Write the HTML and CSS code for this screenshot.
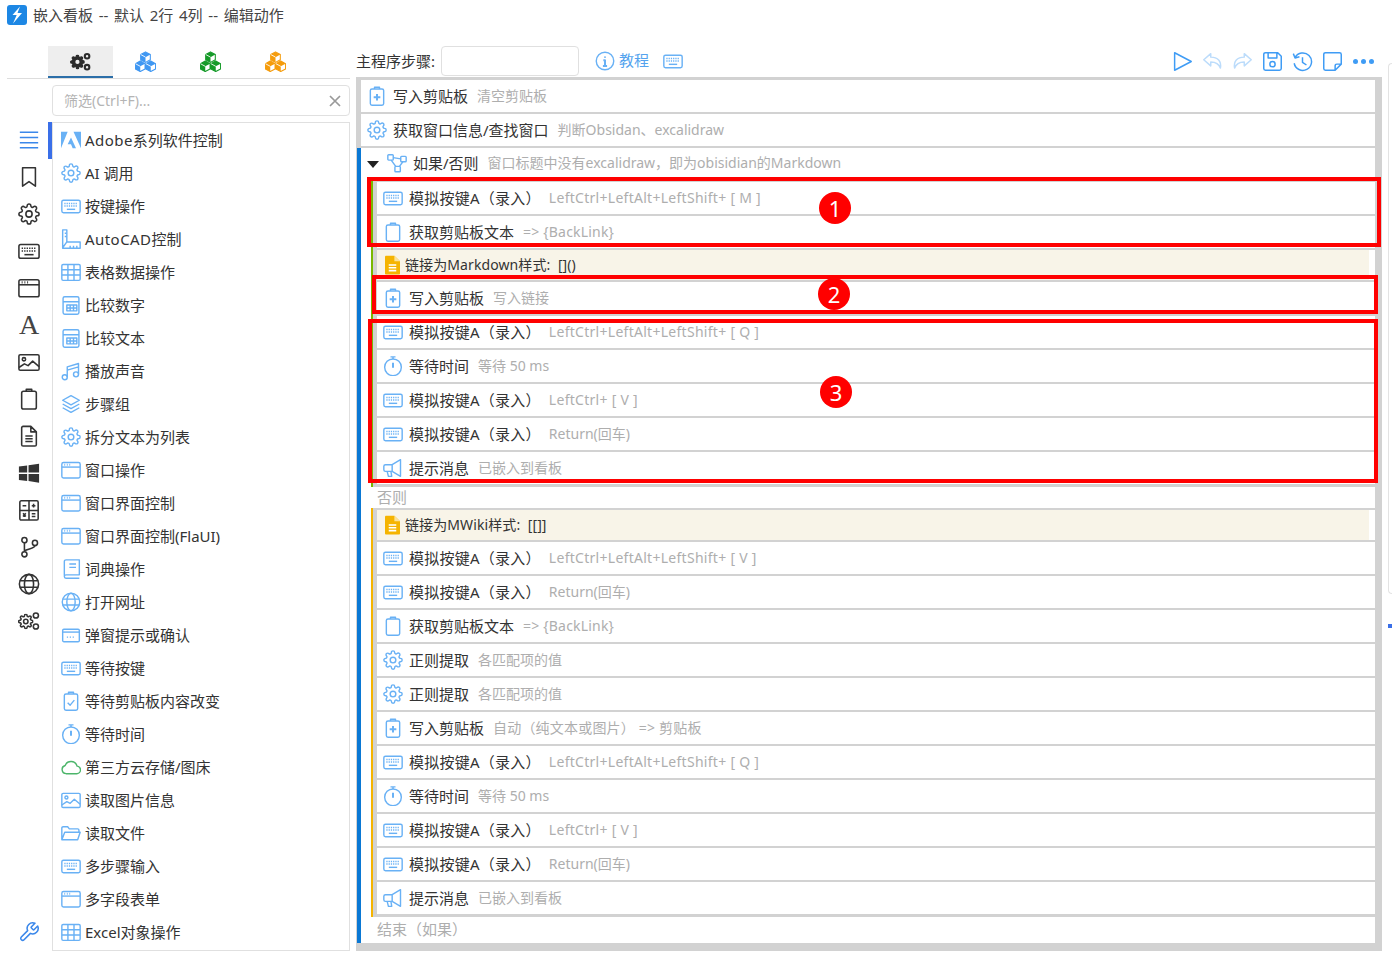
FILE: index.html
```html
<!DOCTYPE html>
<html lang="zh-CN">
<head>
    <meta charset="UTF-8">
    <meta name="viewport" content="width=device-width, initial-scale=1.0">
    <title>嵌入看板 -- 编辑动作</title>
    <link rel="stylesheet" href="styles.css">
</head>
<body>
    <svg class="sprite" xmlns="http://www.w3.org/2000/svg">
        <symbol id="kb" viewBox="0 0 24 24"><rect x="1" y="5" width="22" height="15" rx="2"/><path d="M4 9h16M4 12h16" stroke-dasharray="1.5 1.2"/><path d="M7 16h10"/></symbol>
        <symbol id="gear" viewBox="0 0 24 24"><circle cx="12" cy="12" r="3.4"/><path d="M19.4 15a1.65 1.65 0 0 0 .33 1.82l.06.06a2 2 0 0 1 0 2.83 2 2 0 0 1-2.83 0l-.06-.06a1.65 1.65 0 0 0-1.82-.33 1.65 1.65 0 0 0-1 1.51V21a2 2 0 0 1-2 2 2 2 0 0 1-2-2v-.09A1.65 1.65 0 0 0 9 19.4a1.65 1.65 0 0 0-1.82.33l-.06.06a2 2 0 0 1-2.83 0 2 2 0 0 1 0-2.83l.06-.06a1.65 1.65 0 0 0 .33-1.82 1.65 1.65 0 0 0-1.51-1H3a2 2 0 0 1-2-2 2 2 0 0 1 2-2h.09A1.65 1.65 0 0 0 4.6 9a1.65 1.65 0 0 0-.33-1.82l-.06-.06a2 2 0 0 1 0-2.83 2 2 0 0 1 2.83 0l.06.06a1.65 1.65 0 0 0 1.82.33H9a1.65 1.65 0 0 0 1-1.51V3a2 2 0 0 1 2-2 2 2 0 0 1 2 2v.09a1.65 1.65 0 0 0 1 1.51 1.65 1.65 0 0 0 1.82-.33l.06-.06a2 2 0 0 1 2.83 0 2 2 0 0 1 0 2.83l-.06.06a1.65 1.65 0 0 0-.33 1.82V9a1.65 1.65 0 0 0 1.51 1H21a2 2 0 0 1 2 2 2 2 0 0 1-2 2h-.09a1.65 1.65 0 0 0-1.51 1z"/></symbol>
        <symbol id="clip" viewBox="0 0 24 24"><rect x="4" y="3.5" width="16" height="19.5" rx="2"/><path d="M9 3.5V1.5h6v2" /></symbol>
        <symbol id="clip-plus" viewBox="0 0 24 24"><rect x="4" y="3.5" width="16" height="19.5" rx="2"/><path d="M9 3.5V1.5h6v2"/><path class="thick" d="M12 9.5v8M8 13.500h8"/></symbol>
        <symbol id="clip-check" viewBox="0 0 24 24"><rect x="4" y="3.500" width="16" height="19.500" rx="2"/><path d="M9 3.500V1.500h6v2"/><path d="M8 14l3 3 5-6"/></symbol>
        <symbol id="timer" viewBox="0 0 24 24"><circle cx="12" cy="13.500" r="10"/><path d="M9 1h6M12 1v2.500"/><path class="thick" d="M12 8v6"/></symbol>
        <symbol id="horn" viewBox="0 0 24 24"><path d="M1 10a2 2 0 0 1 2-2h8v8H3a2 2 0 0 1-2-2zM11 8l10-6v20l-10-6M5 16l1.500 6h4L9.500 16"/></symbol>
        <symbol id="flow" viewBox="0 0 24 24"><rect x="1" y="2" width="6.500" height="6.500" rx="1"/><rect x="16.500" y="4" width="6.500" height="6.500" rx="1"/><rect x="9.500" y="16" width="6.500" height="6.500" rx="1"/><path d="M7.500 5.500l9 1.500M5 8.500l5.500 7.500M19 10.500l-4 5.500"/></symbol>
        <symbol id="adobe" viewBox="0 0 24 24"><path class="solid" d="M0 2h8L0 22zM15 2h9v20zM12 9l6 13h-4l-2-5H8z"/></symbol>
        <symbol id="cad" viewBox="0 0 24 24"><path d="M2 1h5v14.500h16V23H2zM7 15.500l-5 7"/><path d="M4.500 5h2M4.500 9h2M11 23v-3M15 23v-3M19 23v-3"/></symbol>
        <symbol id="table" viewBox="0 0 24 24"><rect x="1" y="3" width="22" height="19" rx="1.500"/><path d="M1 9.300h22M1 15.600h22M8.300 3v19M15.600 3v19"/></symbol>
        <symbol id="calc" viewBox="0 0 24 24"><rect x="2.500" y="2" width="19" height="21" rx="2"/><path d="M2.500 8h19M7 12h12v7H7zM7 15.500h12M11 12v7M15 12v7"/></symbol>
        <symbol id="music" viewBox="0 0 24 24"><circle cx="4.500" cy="19.500" r="3"/><circle cx="18" cy="16" r="3"/><path d="M7.500 19.500V7L21 3v13M7.500 11L21 7"/></symbol>
        <symbol id="layers" viewBox="0 0 24 24"><path d="M12 2L2 7.500 12 13l10-5.500zM2 12l10 5.500L22 12M2 16.500L12 22l10-5.500"/></symbol>
        <symbol id="window" viewBox="0 0 24 24"><rect x="1" y="3" width="22" height="18.500" rx="2"/><path d="M1 8.500h22"/><path class="thick" d="M4 5.800h1M7 5.800h1M10 5.800h1"/></symbol>
        <symbol id="book" viewBox="0 0 24 24"><path d="M4 20V3a2 2 0 0 1 2-2h16v18H6a2 2 0 0 0 0 4h16M10 6h8M10 10h8"/></symbol>
        <symbol id="globe" viewBox="0 0 24 24"><circle cx="12" cy="12" r="10.500"/><ellipse cx="12" cy="12" rx="5" ry="10.500"/><path d="M2 8.500h20M2 15.500h20"/></symbol>
        <symbol id="dialog" viewBox="0 0 24 24"><rect x="2" y="5" width="20" height="15" rx="1.500"/><path d="M2 8.500h20"/><path d="M7 14.500h10" stroke-dasharray="1.500 2"/></symbol>
        <symbol id="cloud" viewBox="0 0 24 24"><path d="M6 20a5 5 0 0 1-1-9.800 7.500 7.500 0 0 1 14.300.8A4.500 4.500 0 0 1 18.500 20z"/></symbol>
        <symbol id="image" viewBox="0 0 24 24"><rect x="1" y="4" width="22" height="17" rx="1.500"/><circle cx="6.500" cy="9" r="1.800"/><path d="M1 18l6-4 4 2 5-5 7 6"/></symbol>
        <symbol id="folder" viewBox="0 0 24 24"><path d="M1 20V6a1.500 1.500 0 0 1 1.500-1.500H8l2 2.500h10a1.500 1.500 0 0 1 1.500 1.500V11M1 20l3.500-9H23l-3 9z"/></symbol>
        <symbol id="menu" viewBox="0 0 24 24"><path d="M2 3.500h20M2 9.200h20M2 14.900h20M2 20.500h20"/></symbol>
        <symbol id="mark" viewBox="0 0 24 24"><path d="M5 2h14v20l-7-5-7 5z"/></symbol>
        <symbol id="doc" viewBox="0 0 24 24"><path d="M4 3a1.500 1.500 0 0 1 1.500-1.500H14l6 6V21.500A1.500 1.500 0 0 1 18.500 23h-13A1.500 1.500 0 0 1 4 21.500zM14 1.500v6h6M8 12h8M8 15h8M8 18h8"/></symbol>
        <symbol id="win" viewBox="0 0 24 24"><path class="solid" d="M1 5l9-1.300v7.800H1zM11.500 3.500L23 1.800v9.700H11.500zM1 13h9v7.800L1 19.500zM11.500 13H23v9.500l-11.500-1.700z"/></symbol>
        <symbol id="calc2" viewBox="0 0 24 24"><rect x="2" y="2" width="20" height="21" rx="1.500"/><path d="M12 2v21M2 12.500h20M5 7.300h4M15 7.300h4M17 5.300v4M5.500 15.500l3 3.500M8.500 15.500l-3 3.500M15 16h4M15 19h4"/></symbol>
        <symbol id="git" viewBox="0 0 24 24"><circle cx="7" cy="4.500" r="2.800"/><circle cx="7" cy="20" r="2.800"/><circle cx="18.500" cy="7.500" r="2.800"/><path d="M7 7.300v9.900M18.500 10.300c0 3.500-8 3.500-11.500 6"/></symbol>
        <symbol id="gears" viewBox="0 0 24 24"><use class="gear-big" href="#gear" x="0" y="4" width="17" height="17"/><circle cx="19.500" cy="6" r="2.800"/><circle cx="19.500" cy="18" r="2.800"/></symbol>
        <symbol id="wrench" viewBox="0 0 24 24"><path d="M14.700 6.300a1 1 0 0 0 0 1.400l1.600 1.600a1 1 0 0 0 1.400 0l3.770-3.770a6 6 0 0 1-7.940 7.940l-6.910 6.910a2.120 2.120 0 0 1-3-3l6.910-6.910a6 6 0 0 1 7.940-7.940l-3.760 3.760z"/></symbol>
        <symbol id="cubes" viewBox="0 0 24 24">
            <path class="face" d="M12 1l5.500 3v6L12 13 6.500 10V4zM6 11.500l5.500 3v6L6 23.500l-5.500-3v-6zM18 11.500l5.500 3v6l-5.500 3-5.500-3v-6z"/>
            <path class="solid" d="M12 1l5.500 3L12 7v6l-5.500-3V4zM6 11.500l5.500 3L6 17.500v6l-5.500-3v-6zM18 11.500l5.500 3-5.500 3v6l-5.500-3v-6z"/>
            <path class="cut" d="M6.500 4L12 7M.5 14.500L6 17.500M12.500 14.500l5.500 3"/>
        </symbol>
        <symbol id="gears-solid" viewBox="0 0 24 24">
            <use class="gear-fill" href="#gear" x="0" y="4" width="17" height="17"/>
            <circle class="gear-hole" cx="8.500" cy="12.500" r="2.400"/>
            <circle class="gear-ring" cx="19.500" cy="6" r="2.600"/>
            <circle class="gear-ring" cx="19.500" cy="18.500" r="2.600"/>
        </symbol>
        <symbol id="play" viewBox="0 0 24 24"><path d="M3 2l19 10L3 22z"/></symbol>
        <symbol id="undo" viewBox="0 0 24 24"><path d="M10 3L2 10l8 7v-4.500c5 0 9 1 11 7 1.500-8-3-12.500-11-12.500z"/></symbol>
        <symbol id="redo" viewBox="0 0 24 24"><path d="M14 3l8 7-8 7v-4.500c-5 0-9 1-11 7-1.500-8 3-12.500 11-12.500z"/></symbol>
        <symbol id="save" viewBox="0 0 24 24"><path d="M2 4a2 2 0 0 1 2-2h14l4 4v14a2 2 0 0 1-2 2H4a2 2 0 0 1-2-2zM7 2v6h10V2"/><circle cx="12" cy="15" r="3"/></symbol>
        <symbol id="history" viewBox="0 0 24 24"><path d="M3.500 7.500A10 10 0 1 1 2.500 14M1.500 3l2 5 5-1.500M12 7v6l4.500 3"/></symbol>
        <symbol id="note" viewBox="0 0 24 24"><path d="M15 22H4a2 2 0 0 1-2-2V4a2 2 0 0 1 2-2h16a2 2 0 0 1 2 2v11zM15 22v-5a2 2 0 0 1 2-2h5"/></symbol>
        <symbol id="info" viewBox="0 0 24 24"><circle cx="12" cy="12" r="10.500"/><path class="thick" d="M12 6.500v1.500M10 11h2v7M9.500 18h5"/></symbol>
    </svg>

    <div class="title-bar">
        <svg class="logo" viewBox="0 0 20 20"><rect width="20" height="20" rx="3" fill="#1d87e4"/><path d="M13 1.500L5.500 10h4.200L6 18.500 15 8h-4.500z" fill="#fff"/></svg>
        <span class="title-text">嵌入看板 -- 默认 2行 4列 -- 编辑动作</span>
    </div>

    <div class="main">
        <div class="left">
            <div class="tabs">
                <div class="tab active"><svg class="tab-ico ink"><use href="#gears-solid"/></svg></div>
                <div class="tab"><svg class="tab-ico c-blue"><use href="#cubes"/></svg></div>
                <div class="tab"><svg class="tab-ico c-green"><use href="#cubes"/></svg></div>
                <div class="tab"><svg class="tab-ico c-orange"><use href="#cubes"/></svg></div>
            </div>
            <div class="left-body">
                <div class="rail">
                    <div class="rail-item on"><svg class="ico"><use href="#menu"/></svg></div>
                    <div class="rail-item"><svg class="ico"><use href="#mark"/></svg></div>
                    <div class="rail-item"><svg class="ico"><use href="#gear"/></svg></div>
                    <div class="rail-item"><svg class="ico"><use href="#kb"/></svg></div>
                    <div class="rail-item"><svg class="ico"><use href="#window"/></svg></div>
                    <div class="rail-item rail-a">A</div>
                    <div class="rail-item"><svg class="ico"><use href="#image"/></svg></div>
                    <div class="rail-item"><svg class="ico"><use href="#clip"/></svg></div>
                    <div class="rail-item"><svg class="ico"><use href="#doc"/></svg></div>
                    <div class="rail-item"><svg class="ico"><use href="#win"/></svg></div>
                    <div class="rail-item"><svg class="ico"><use href="#calc2"/></svg></div>
                    <div class="rail-item"><svg class="ico"><use href="#git"/></svg></div>
                    <div class="rail-item"><svg class="ico"><use href="#globe"/></svg></div>
                    <div class="rail-item"><svg class="ico"><use href="#gears"/></svg></div>
                    <div class="rail-item rail-end on"><svg class="ico"><use href="#wrench"/></svg></div>
                </div>
                <div class="tree">
                    <div class="filter">
                        <span>筛选(Ctrl+F)...</span>
                        <svg class="filter-x" viewBox="0 0 12 12"><path d="M1 1l10 10M11 1L1 11"/></svg>
                    </div>
                    <div class="cats">
                        <div class="cat selected"><svg class="ico"><use href="#adobe"/></svg><span><span class="wide">Adobe</span>系列软件控制</span></div>
                        <div class="cat"><svg class="ico"><use href="#gear"/></svg><span>AI 调用</span></div>
                        <div class="cat"><svg class="ico"><use href="#kb"/></svg><span>按键操作</span></div>
                        <div class="cat"><svg class="ico"><use href="#cad"/></svg><span><span class="wide">AutoCAD</span>控制</span></div>
                        <div class="cat"><svg class="ico"><use href="#table"/></svg><span>表格数据操作</span></div>
                        <div class="cat"><svg class="ico"><use href="#calc"/></svg><span>比较数字</span></div>
                        <div class="cat"><svg class="ico"><use href="#calc"/></svg><span>比较文本</span></div>
                        <div class="cat"><svg class="ico"><use href="#music"/></svg><span>播放声音</span></div>
                        <div class="cat"><svg class="ico"><use href="#layers"/></svg><span>步骤组</span></div>
                        <div class="cat"><svg class="ico"><use href="#gear"/></svg><span>拆分文本为列表</span></div>
                        <div class="cat"><svg class="ico"><use href="#window"/></svg><span>窗口操作</span></div>
                        <div class="cat"><svg class="ico"><use href="#window"/></svg><span>窗口界面控制</span></div>
                        <div class="cat"><svg class="ico"><use href="#window"/></svg><span>窗口界面控制(FlaUI)</span></div>
                        <div class="cat"><svg class="ico"><use href="#book"/></svg><span>词典操作</span></div>
                        <div class="cat"><svg class="ico"><use href="#globe"/></svg><span>打开网址</span></div>
                        <div class="cat"><svg class="ico"><use href="#dialog"/></svg><span>弹窗提示或确认</span></div>
                        <div class="cat"><svg class="ico"><use href="#kb"/></svg><span>等待按键</span></div>
                        <div class="cat"><svg class="ico"><use href="#clip-check"/></svg><span>等待剪贴板内容改变</span></div>
                        <div class="cat"><svg class="ico"><use href="#timer"/></svg><span>等待时间</span></div>
                        <div class="cat"><svg class="ico c-cloud"><use href="#cloud"/></svg><span>第三方云存储/图床</span></div>
                        <div class="cat"><svg class="ico"><use href="#image"/></svg><span>读取图片信息</span></div>
                        <div class="cat"><svg class="ico"><use href="#folder"/></svg><span>读取文件</span></div>
                        <div class="cat"><svg class="ico"><use href="#kb"/></svg><span>多步骤输入</span></div>
                        <div class="cat"><svg class="ico"><use href="#window"/></svg><span>多字段表单</span></div>
                        <div class="cat"><svg class="ico"><use href="#table"/></svg><span>Excel对象操作</span></div>
                    </div>
                </div>
            </div>
        </div>

        <div class="right">
            <div class="toolbar">
                <span class="step-label">主程序步骤:</span>
                <div class="step-input"></div>
                <a class="help"><svg class="ico"><use href="#info"/></svg><span>教程</span></a>
                <svg class="ico kb-btn"><use href="#kb"/></svg>
                <div class="actions">
                    <svg class="act"><use href="#play"/></svg>
                    <svg class="act dim"><use href="#undo"/></svg>
                    <svg class="act dim"><use href="#redo"/></svg>
                    <svg class="act"><use href="#save"/></svg>
                    <svg class="act"><use href="#history"/></svg>
                    <svg class="act"><use href="#note"/></svg>
                    <span class="dots"><i></i><i></i><i></i></span>
                </div>
            </div>

            <div class="panel">
                <div class="row top"><svg class="ico"><use href="#clip-plus"/></svg><span class="name">写入剪贴板</span><span class="sub">清空剪贴板</span></div>
                <div class="row top"><svg class="ico"><use href="#gear"/></svg><span class="name">获取窗口信息/查找窗口</span><span class="sub">判断Obsidan、excalidraw</span></div>

                <div class="branch">
                    <div class="row head"><i class="caret"></i><svg class="ico"><use href="#flow"/></svg><span class="name">如果/否则</span><span class="sub">窗口标题中没有excalidraw，即为obisidian的Markdown</span></div>
                    <div class="nest green">
                        <div class="row"><svg class="ico"><use href="#kb"/></svg><span class="name key-name">模拟按键A（录入）</span><span class="sub keys">LeftCtrl+LeftAlt+LeftShift+ [ M ]</span></div>
                        <div class="row"><svg class="ico"><use href="#clip"/></svg><span class="name">获取剪贴板文本</span><span class="sub link">=&gt; {BackLink}</span></div>
                        <div class="note"><svg class="note-ico" viewBox="0 0 16 20"><path d="M1 0h9l6 6v13a1 1 0 0 1-1 1H1a1 1 0 0 1-1-1V1a1 1 0 0 1 1-1z" fill="#f5b400"/><path d="M10 0l6 6h-6z" fill="#fbe29a"/><path d="M4 10h8M4 13h8M4 16h8" stroke="#fff"/></svg><span>链接为Markdown样式:&nbsp;&nbsp;[]()</span></div>
                        <div class="row"><svg class="ico"><use href="#clip-plus"/></svg><span class="name">写入剪贴板</span><span class="sub">写入链接</span></div>
                        <div class="row"><svg class="ico"><use href="#kb"/></svg><span class="name key-name">模拟按键A（录入）</span><span class="sub keys">LeftCtrl+LeftAlt+LeftShift+ [ Q ]</span></div>
                        <div class="row"><svg class="ico"><use href="#timer"/></svg><span class="name">等待时间</span><span class="sub">等待 50 ms</span></div>
                        <div class="row"><svg class="ico"><use href="#kb"/></svg><span class="name key-name">模拟按键A（录入）</span><span class="sub keys">LeftCtrl+ [ V ]</span></div>
                        <div class="row"><svg class="ico"><use href="#kb"/></svg><span class="name key-name">模拟按键A（录入）</span><span class="sub keys-plain">Return(回车)</span></div>
                        <div class="row"><svg class="ico"><use href="#horn"/></svg><span class="name">提示消息</span><span class="sub">已嵌入到看板</span></div>
                    </div>
                    <div class="label else">否则</div>
                    <div class="nest orange">
                        <div class="note"><svg class="note-ico" viewBox="0 0 16 20"><path d="M1 0h9l6 6v13a1 1 0 0 1-1 1H1a1 1 0 0 1-1-1V1a1 1 0 0 1 1-1z" fill="#f5b400"/><path d="M10 0l6 6h-6z" fill="#fbe29a"/><path d="M4 10h8M4 13h8M4 16h8" stroke="#fff"/></svg><span>链接为MWiki样式:&nbsp;&nbsp;[[]]</span></div>
                        <div class="row"><svg class="ico"><use href="#kb"/></svg><span class="name key-name">模拟按键A（录入）</span><span class="sub keys">LeftCtrl+LeftAlt+LeftShift+ [ V ]</span></div>
                        <div class="row"><svg class="ico"><use href="#kb"/></svg><span class="name key-name">模拟按键A（录入）</span><span class="sub keys-plain">Return(回车)</span></div>
                        <div class="row"><svg class="ico"><use href="#clip"/></svg><span class="name">获取剪贴板文本</span><span class="sub link">=&gt; {BackLink}</span></div>
                        <div class="row"><svg class="ico"><use href="#gear"/></svg><span class="name">正则提取</span><span class="sub">各匹配项的值</span></div>
                        <div class="row"><svg class="ico"><use href="#gear"/></svg><span class="name">正则提取</span><span class="sub">各匹配项的值</span></div>
                        <div class="row"><svg class="ico"><use href="#clip-plus"/></svg><span class="name">写入剪贴板</span><span class="sub link">自动（纯文本或图片） =&gt; 剪贴板</span></div>
                        <div class="row"><svg class="ico"><use href="#kb"/></svg><span class="name key-name">模拟按键A（录入）</span><span class="sub keys">LeftCtrl+LeftAlt+LeftShift+ [ Q ]</span></div>
                        <div class="row"><svg class="ico"><use href="#timer"/></svg><span class="name">等待时间</span><span class="sub">等待 50 ms</span></div>
                        <div class="row"><svg class="ico"><use href="#kb"/></svg><span class="name key-name">模拟按键A（录入）</span><span class="sub keys">LeftCtrl+ [ V ]</span></div>
                        <div class="row"><svg class="ico"><use href="#kb"/></svg><span class="name key-name">模拟按键A（录入）</span><span class="sub keys-plain">Return(回车)</span></div>
                        <div class="row"><svg class="ico"><use href="#horn"/></svg><span class="name">提示消息</span><span class="sub">已嵌入到看板</span></div>
                    </div>
                    <div class="label end">结束（如果）</div>
                </div>

                <!-- red annotations drawn over the steps -->
                <div class="mark box-1"></div>
                <div class="mark box-2"></div>
                <div class="mark box-3"></div>
                <div class="badge badge-1">1</div>
                <div class="badge badge-2">2</div>
                <div class="badge badge-3">3</div>
            </div>
        </div>

        <div class="edge">
            <div class="edge-box"></div>
            <div class="edge-dot"></div>
        </div>
    </div>
</body>
</html>
```

FILE: styles.css
```css
* {
    box-sizing: border-box;
}
body {
    margin: 0;
    height: 956px;
    overflow: hidden;
    background: #fff;
    color: #333;
    font-family: "Noto Sans", "Noto Sans CJK SC", sans-serif;
    font-size: 15px;
}
.sprite {
    display: none;
}
svg {
    fill: none;
    stroke: currentColor;
    stroke-width: 1.7;
    stroke-linejoin: round;
}
.solid {
    fill: currentColor;
    stroke: none;
}
.thick {
    stroke-width: 2.4;
}
.ico {
    flex: none;
    width: 20px;
    height: 20px;
    color: #69b1f5;
}

/* title */
.title-bar {
    display: flex;
    align-items: center;
    height: 30px;
    padding: 0 0 0 7px;
    gap: 6px;
    color: #444;
}
.logo {
    width: 20px;
    height: 20px;
    stroke: none;
}
.title-text {
    padding-bottom: 2px;
    word-spacing: 1.8px;
}

.main {
    display: flex;
    margin-top: 16px;
    padding-left: 7px;
}

/* left column */
.left {
    width: 343px;
    flex: none;
}
.tabs {
    display: flex;
    height: 33px;
    padding-left: 41px;
    border-bottom: 1px solid #ddd;
}
.tab {
    display: flex;
    justify-content: center;
    align-items: center;
    width: 65px;
    height: 32px;
}
.tab.active {
    background: #eee;
    border-bottom: 2px solid #2b6ea8;
}
.tab-ico {
    width: 21px;
    height: 21px;
}
.tab:not(.active) .tab-ico {
    margin: 0 0 1px -1px;
}
.c-blue { color: #3f97f2; }
.c-green { color: #159a28; }
.c-orange { color: #f59c0c; }
.c-cloud { color: #4cb56a; }
.face {
    fill: #fff;
    stroke: currentColor;
    stroke-width: 1.2;
}
.cut {
    stroke: #fff;
    stroke-width: 1;
}
.ink {
    color: #2b2b2b;
}
.gear-big {
    stroke-width: 2.4;
}
.gear-fill {
    fill: currentColor;
    stroke-width: 2;
}
.gear-hole {
    fill: #eee;
    stroke: none;
}
.gear-ring {
    stroke-width: 2.4;
}
.left-body {
    display: flex;
}
.rail {
    display: flex;
    flex-direction: column;
    width: 45px;
    height: 872px;
    padding: 42px 1px 1px 0;
}
.rail-item {
    display: flex;
    justify-content: center;
    align-items: center;
    height: 37px;
}
.rail-item .ico {
    width: 22px;
    height: 22px;
    color: #333;
}
.rail-item.on .ico {
    color: #3a87ea;
}
.rail-end {
    margin-top: auto;
}
.rail-a {
    font-family: "Liberation Serif", serif;
    font-size: 28px;
    color: #444;
}
.tree {
    flex: 1;
    min-width: 0;
}
.filter {
    display: flex;
    align-items: center;
    justify-content: space-between;
    height: 31px;
    margin-top: 6px;
    padding: 0 8px 0 11px;
    border: 1px solid #e0e0e0;
    border-radius: 4px;
    font-size: 14px;
    color: #b4b4b4;
}
.filter span {
    padding-bottom: 2px;
}
.filter-x {
    width: 12px;
    height: 12px;
    color: #999;
}
.cats {
    height: 829px;
    margin-top: 6px;
    border: 1px solid #e0e0e0;
}
.cat {
    position: relative;
    display: flex;
    align-items: center;
    gap: 4px;
    height: 33px;
    padding-left: 8px;
}
.cat.selected::before {
    content: "";
    position: absolute;
    left: -5px;
    top: -1px;
    width: 4px;
    height: 37px;
    background: #3a6fe8;
}
.wide {
    letter-spacing: .45px;
}

/* right column */
.right {
    width: 1026px;
    flex: none;
    margin-left: 6px;
}
.toolbar {
    display: flex;
    align-items: center;
    height: 30px;
    margin-bottom: 1px;
}
.step-label {
    width: 85px;
    padding-bottom: 1px;
}
.step-input {
    width: 138px;
    height: 30px;
    border: 1px solid #e0e0e0;
    border-radius: 4px;
}
.help {
    display: flex;
    align-items: center;
    gap: 4px;
    margin-left: 16px;
    color: #54a3ee;
}
.help span {
    padding-bottom: 3px;
}
.kb-btn {
    margin-left: 14px;
}
.actions {
    display: flex;
    align-items: center;
    gap: 9px;
    margin-left: auto;
    padding-right: 8px;
    color: #3f9cf5;
}
.act {
    width: 21px;
    height: 21px;
}
.act.dim {
    color: #bcdcfb;
}
.dots {
    display: flex;
    gap: 3px;
    margin-left: 1px;
}
.dots i {
    width: 5px;
    height: 5px;
    border-radius: 50%;
    background: #3f9cf5;
}

/* step panel */
.panel {
    position: relative;
    padding: 3px 7px 8px 1px;
    background: #d2d2d2;
}
.row {
    display: flex;
    align-items: center;
    height: 32px;
    margin-bottom: 2px;
    padding-left: 6px;
    background: #fff;
}
.row .ico {
    margin-right: 6px;
}
.row.top {
    margin-left: 4px;
}
.name,
.sub {
    padding-bottom: 2px;
}
.name {
    color: #333;
}
.key-name {
    letter-spacing: .25px;
}
.sub {
    margin-left: 9px;
    font-size: 14px;
    color: #aeaeae;
}
.keys {
    margin-left: 8px;
    letter-spacing: .28px;
}
.keys-plain {
    margin-left: 8px;
}
.link {
    letter-spacing: .2px;
}
.branch {
    border-left: 4px solid #0a78d4;
    background: #fff;
}
.row.head {
    margin-bottom: 0;
}
.head .name,
.head .sub {
    padding-bottom: 4px;
}
.head .ico {
    margin-bottom: 2px;
}
.caret {
    width: 0;
    height: 0;
    margin-right: 8px;
    border-style: solid;
    border-width: 7px 6px 0;
    border-color: #222 transparent transparent;
}
.nest {
    margin-left: 10px;
    padding: 2px 0 1px 4px;
    border-left: 2px solid;
    background: #d2d2d2;
}
.nest.green {
    border-color: #7ab800;
}
.nest.orange {
    border-color: #f5b400;
}
.note {
    display: flex;
    align-items: center;
    height: 30px;
    margin-bottom: 2px;
    padding-left: 8px;
    border-right: 6px solid #fff;
    background: #f8f4e8;
    font-size: 14px;
    letter-spacing: .1px;
}
.note span {
    padding-bottom: 2px;
}
.note-ico {
    width: 15px;
    height: 20px;
    margin-right: 5px;
    stroke: none;
}
.note-ico path[stroke] {
    stroke: #fff;
}
.label {
    padding-left: 16px;
    color: #aeaeae;
}
.label.else {
    height: 21px;
    line-height: 21px;
}
.label.end {
    height: 26px;
    line-height: 24px;
}

.mark {
    position: absolute;
    border: 4px solid #f00;
}
.box-1 { left: 11px; top: 100px; width: 1014px; height: 70px; }
.box-2 { left: 16px; top: 198px; width: 1006px; height: 39px; }
.box-3 { left: 12px; top: 242px; width: 1010px; height: 164px; }
.badge {
    position: absolute;
    width: 32px;
    height: 32px;
    border-radius: 50%;
    background: #f00;
    color: #fff;
    font-size: 22px;
    line-height: 32px;
    text-align: center;
}
.badge-1 { left: 463px; top: 115px; }
.badge-2 { left: 462px; top: 201px; }
.badge-3 { left: 464px; top: 299px; }

/* next panel, cut off by the window */
.edge {
    flex: none;
    width: 4px;
    margin-left: 6px;
}
.edge-box {
    height: 531px;
    margin-top: 17px;
    border: 1px solid #e3e3e3;
    border-right: 0;
    border-radius: 5px 0 0 5px;
}
.edge-dot {
    height: 4px;
    margin-top: 30px;
    background: #3a6fe8;
}
```
